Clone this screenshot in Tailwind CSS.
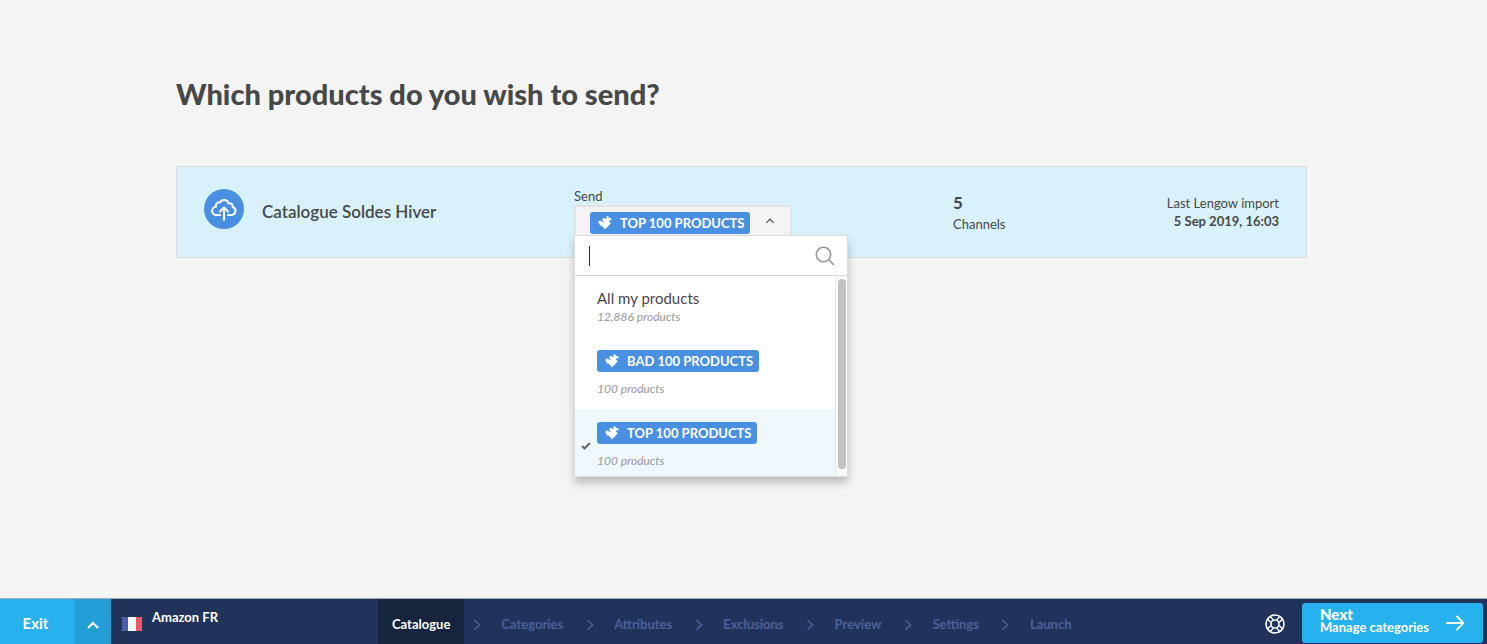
<!DOCTYPE html>
<html lang="en">
<head>
    <meta charset="UTF-8">
    <meta name="viewport" content="width=device-width, initial-scale=1.0">
    <title>Catalogue - Amazon FR</title>
    <script src="https://cdn.jsdelivr.net/npm/@tailwindcss/browser@4"></script>
</head>
<body class="min-h-screen flex flex-col bg-[#f4f4f4] font-['Lato',sans-serif] text-[#484848]">
    <!-- Shared icons -->
    <svg class="hidden">
        <symbol id="puzzle" viewBox="0 0 14 14">
            <path fill="currentColor" d="M.7 5.200C1.500 4.300 2.900 4.300 3.700 5.200L4.700 6.200 5.700 5.200C4.400 4.800 3.900 3.300 4.800 2.400 5.700 1.500 7.200 2 7.500 3.300L8.800 2.500C8.200 1.800 8.300 1 8.800.6 9.400 0 10.300.1 10.700.7 11 1.200 10.900 1.600 10.700 2L11.500 2.500C12.200 1.900 12.900 2 13.300 2.500 13.800 3.100 13.600 3.900 13 4.300 12.500 4.600 12 4.500 11.500 4.200L10.700 5.200 12.800 7.400 7.200 13.200 3.800 9.700C2.800 10 2 9.600 1.700 9 1.500 8.500 1.600 8.100 1.800 7.800.3 7.600-.1 6.100.7 5.200z"/>
        </symbol>
        <symbol id="chevron" viewBox="0 0 8 12">
            <path fill="none" stroke="currentColor" stroke-width="1.5" d="M1.500 1.200L6.500 6l-5 4.800"/>
        </symbol>
    </svg>

    <!-- Main Content -->
    <main class="flex-1 w-full pl-44 pr-[180px] pt-[75px]">
        <h1 class="text-[29px] leading-[38px] font-black">Which products do you wish to send?</h1>

        <!-- Catalogue row -->
        <section class="mt-[53px] h-[92px] flex items-start bg-[#d9f1fb] border border-[#d8dcde] px-[27px]">
            <div class="w-[370px] flex items-center mt-[22px]">
                <svg class="w-10 h-10" viewBox="0 0 40 40" fill="none">
                    <circle cx="20" cy="20" r="20" fill="#4a90e2"/>
                    <g stroke="#fff" stroke-width="2" stroke-linecap="round" stroke-linejoin="round">
                        <path d="M16 26h-3.500a4.100 4.100 0 0 1-.5-8.200c-.8-3.300 1.800-5 4.200-4.300 1.600-3.600 7.600-3.200 8.300.8 2.700-.7 4.700 1.300 4.100 3.700a4.100 4.100 0 0 1-1 8H24"/>
                        <path d="M20 31V18.500M16 22.500l4-4 4 4"/>
                    </g>
                </svg>
                <h2 class="ml-[18px] mt-1.5 text-[17px] leading-6 font-semibold">Catalogue Soldes Hiver</h2>
            </div>

            <div class="w-[379px] mt-5">
                <span id="send-label" class="block text-[13px] leading-[18px]">Send</span>
                <div class="relative w-[218px]">
                    <button type="button" aria-labelledby="send-label" aria-expanded="true" class="w-full h-8 flex items-center pl-3.5 pt-0.5 bg-[#f4f4f4] border-2 border-[#e4e4e4] border-b-0 rounded-t-[3px]">
                        <span class="h-[22px] flex items-center gap-2 pl-2 pr-1.5 pt-0.5 rounded-[3px] bg-[#4a90e2] text-white text-[13px] font-bold whitespace-nowrap">
                            <svg class="w-3.5 h-3.5 mb-0.5"><use href="#puzzle"/></svg>
                            TOP 100 PRODUCTS
                        </span>
                        <svg class="w-1.5 h-2.5 ml-[17px] mb-1 -rotate-90"><use href="#chevron"/></svg>
                    </button>

                    <!-- Dropdown -->
                    <div class="absolute z-10 top-[30px] left-0 w-[274px] bg-white border border-[#dcdcdc] shadow-[0_6px_8px_rgba(0,0,0,0.22)]">
                        <div class="h-10 flex items-center pl-3.5 pr-3 border-b border-[#d6d6d6]">
                            <span class="w-px h-5 bg-[#333]"></span>
                            <input type="text" aria-label="Search products" class="flex-1 min-w-0 h-full outline-none text-[15px]">
                            <svg class="w-5 h-5" viewBox="0 0 20 20" fill="none" stroke="#999" stroke-width="1.600">
                                <circle cx="8.500" cy="8.500" r="7.200"/>
                                <path d="M13.600 13.600l5.400 5.400"/>
                            </svg>
                        </div>
                        <div class="flex h-[200px]">
                            <ul role="listbox" aria-label="Products" class="flex-1 overflow-hidden">
                                <li role="option" class="h-[61px] pl-[22px] pt-3">
                                    <p class="text-[15px] leading-5">All my products</p>
                                    <p class="text-[12px] leading-[18px] italic text-[#999]">12,886 products</p>
                                </li>
                                <li role="option" class="h-[72px] pl-[22px] pt-[13px]">
                                    <span class="w-fit h-[22px] flex items-center gap-2 pl-2 pr-1.5 pt-0.5 rounded-[3px] bg-[#4a90e2] text-white text-[13px] font-bold whitespace-nowrap">
                                        <svg class="w-3.5 h-3.5 mb-0.5"><use href="#puzzle"/></svg>
                                        BAD 100 PRODUCTS
                                    </span>
                                    <p class="mt-2 text-[12px] leading-[18px] italic text-[#999]">100 products</p>
                                </li>
                                <li role="option" aria-selected="true" class="h-[72px] pl-[22px] pt-[13px] relative bg-[#eff8fe]">
                                    <svg class="absolute left-1.5 top-8 w-2.5 h-2.5" viewBox="0 0 10 10" fill="none" stroke="#666" stroke-width="2"><path d="M1 5l2.500 2.500L9 2"/></svg>
                                    <span class="w-fit h-[22px] flex items-center gap-2 pl-2 pr-1.5 pt-0.5 rounded-[3px] bg-[#4a90e2] text-white text-[13px] font-bold whitespace-nowrap">
                                        <svg class="w-3.5 h-3.5 mb-0.5"><use href="#puzzle"/></svg>
                                        TOP 100 PRODUCTS
                                    </span>
                                    <p class="mt-2 text-[12px] leading-[18px] italic text-[#999]">100 products</p>
                                </li>
                            </ul>
                            <!-- Scrollbar -->
                            <div class="w-3 pt-[3px] pl-0.5 bg-[#fafafa] border-l border-[#e8e8e8]">
                                <div class="w-2 h-[190px] rounded-full bg-[#c1c1c1]"></div>
                            </div>
                        </div>
                    </div>
                </div>
            </div>

            <div class="mt-6">
                <p class="text-[17px] leading-6 font-bold">5</p>
                <p class="text-[13px] leading-[18px]">Channels</p>
            </div>

            <div class="ml-auto mt-[27px] text-right text-[13px] leading-[18px]">
                <p>Last Lengow import</p>
                <p class="font-bold">5 Sep 2019, 16:03</p>
            </div>
        </section>
    </main>

    <!-- Footer bar -->
    <footer class="h-[46px] flex items-stretch bg-[#21335b] border-t border-[#a0a8b4] text-white font-bold">
        <button type="button" class="w-[75px] pr-1 pt-1 bg-[#27b2ef] text-[15px]">Exit</button>
        <button type="button" aria-label="More" class="w-9 flex items-center justify-center pt-1.5 bg-[#229fd6]">
            <svg class="w-3 h-2" viewBox="0 0 12 8" fill="none" stroke="currentColor" stroke-width="2"><path d="M1 7l5-5 5 5"/></svg>
        </button>
        <div class="w-[267px] flex items-start pl-[11px]">
            <svg class="w-5 h-3.5 mt-[18px]" viewBox="0 0 20 14">
                <rect width="20" height="14" rx="1.500" fill="#f5f6fa"/>
                <path fill="#4a5fae" d="M1.500 0H6v14H1.500A1.500 1.500 0 0 1 0 12.500v-11A1.500 1.500 0 0 1 1.500 0z"/>
                <path fill="#ef5565" d="M14 0h4.500A1.500 1.500 0 0 1 20 1.500v11a1.500 1.500 0 0 1-1.500 1.500H14z"/>
            </svg>
            <span class="ml-2.5 mt-2 text-[13px] leading-5">Amazon FR</span>
        </div>
        <nav class="flex items-stretch text-[13px] text-[#4a619b]">
            <a href="#" class="flex items-center px-3.5 pt-1.5 bg-[#17243e] text-white">Catalogue</a>
            <span class="w-[23px] flex items-center justify-center pl-0.5 pt-1.5"><svg class="w-2 h-3"><use href="#chevron"/></svg></span>
            <a href="#" class="flex items-center px-3.5 pt-1.5">Categories</a>
            <span class="w-[23px] flex items-center justify-center pl-0.5 pt-1.5"><svg class="w-2 h-3"><use href="#chevron"/></svg></span>
            <a href="#" class="flex items-center px-3.5 pt-1.5">Attributes</a>
            <span class="w-[23px] flex items-center justify-center pl-0.5 pt-1.5"><svg class="w-2 h-3"><use href="#chevron"/></svg></span>
            <a href="#" class="flex items-center px-3.5 pt-1.5">Exclusions</a>
            <span class="w-[23px] flex items-center justify-center pl-0.5 pt-1.5"><svg class="w-2 h-3"><use href="#chevron"/></svg></span>
            <a href="#" class="flex items-center px-3.5 pt-1.5">Preview</a>
            <span class="w-[23px] flex items-center justify-center pl-0.5 pt-1.5"><svg class="w-2 h-3"><use href="#chevron"/></svg></span>
            <a href="#" class="flex items-center px-3.5 pt-1.5">Settings</a>
            <span class="w-[23px] flex items-center justify-center pl-0.5 pt-1.5"><svg class="w-2 h-3"><use href="#chevron"/></svg></span>
            <a href="#" class="flex items-center px-3.5 pt-1.5">Launch</a>
        </nav>
        <button type="button" aria-label="Help" class="ml-auto mr-[17px] pt-1">
            <svg class="w-5 h-5" viewBox="0 0 20 20" fill="none" stroke="currentColor" stroke-width="1.600">
                <circle cx="10" cy="10" r="9"/>
                <circle cx="10" cy="10" r="4"/>
                <path d="M5.300 2.700l3 3M2.700 5.300l3 3M14.700 2.700l-3 3M17.300 5.300l-3 3M5.300 17.300l3-3M2.700 14.700l3-3M14.700 17.300l-3-3M17.300 14.700l-3-3" stroke-width="1.300"/>
            </svg>
        </button>
        <button type="button" class="w-[181px] h-10 mt-1 mr-1 flex items-center justify-between pl-[18px] pr-[19px] rounded-[3px] bg-[#27b2ef] text-left">
            <span class="-mt-1.5">
                <span class="block text-[15px] leading-3.5 font-black">Next</span>
                <span class="block text-[13px] leading-3">Manage categories</span>
            </span>
            <svg class="w-[18px] h-4" viewBox="0 0 18 16" fill="none" stroke="currentColor" stroke-width="1.800"><path d="M0 8h17M10.500 1l7 7-7 7"/></svg>
        </button>
    </footer>
</body>
</html>
